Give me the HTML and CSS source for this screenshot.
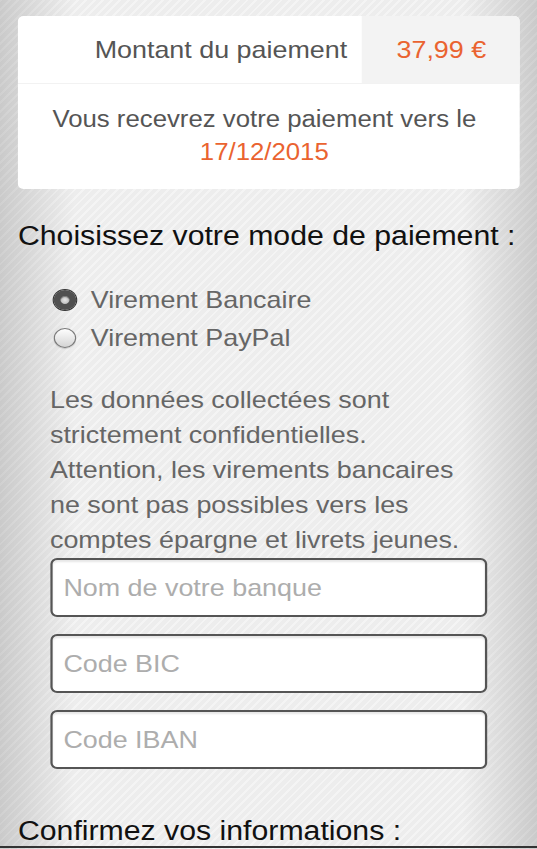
FILE: index.html
```html
<!DOCTYPE html>
<html>
	<head>
		<meta charset="utf-8">
		<title>Paiement</title>
		<link rel="stylesheet" href="styles.css">
	</head>
	<body>
		<div class="page">
			<div class="content">
				<div class="recap">
					<div class="recap-row">
						<div class="recap-label">Montant du paiement</div>
						<div class="recap-amount">37,99 €</div>
					</div>
					<div class="recap-date">
						Vous recevrez votre paiement vers le<br>
						<span class="orange">17/12/2015</span>
					</div>
				</div>

				<h2 class="title">Choisissez votre mode de paiement :</h2>

				<div class="modes">
					<label class="mode"><span class="radio checked"></span>Virement Bancaire</label>
					<label class="mode"><span class="radio"></span>Virement PayPal</label>
				</div>

				<p class="info">Les données collectées sont strictement confidentielles. Attention, les virements bancaires ne sont pas possibles vers les comptes épargne et livrets jeunes.</p>

				<div class="fields">
					<input class="field" type="text" placeholder="Nom de votre banque">
					<input class="field" type="text" placeholder="Code BIC">
					<input class="field" type="text" placeholder="Code IBAN">
				</div>

				<h2 class="title title2">Confirmez vos informations :</h2>
			</div>
			<div class="next-bar"></div>
		</div>
	</body>
</html>
```

FILE: styles.css
```css
*{
	margin: 0;
	padding: 0;
	box-sizing: border-box;
}
html,body{
	height: 100%;
}
body{
	font-family: "Liberation Sans", Arial, sans-serif;
	background-color: #ededed;
	background-image:
		linear-gradient(to right, rgba(0,0,0,0.15) 0px, rgba(0,0,0,0) 75px, rgba(0,0,0,0) 462px, rgba(0,0,0,0.15) 537px),
		repeating-linear-gradient(135deg, rgba(255,255,255,0.4) 0px, rgba(255,255,255,0.4) 2px, rgba(255,255,255,0) 2px, rgba(255,255,255,0) 6px);
	overflow: hidden;
}
.page{
	width: 479.5px;
	transform: scaleX(1.12);
	transform-origin: 0 0;
}
.content{
	padding: 16px 15.5px 0 16px;
}
.recap{
	background: #fff;
	border-radius: 5px;
	overflow: hidden;
	color: #555;
	font-size: 24px;
}
.recap-row{
	display: flex;
	height: 68px;
	border-bottom: 1px solid #f2f2f2;
}
.recap-label{
	flex: 1;
	display: flex;
	align-items: center;
	justify-content: flex-end;
	padding-right: 13px;
}
.recap-amount{
	width: 141px;
	background: #f3f3f3;
	color: #ea6330;
	display: flex;
	align-items: center;
	padding-left: 31px;
}
.recap-date{
	text-align: center;
	font-size: 23px;
	line-height: 33px;
	padding: 19px 8px 20px 0;
}
.orange{
	color: #ea6330;
}
.title{
	font-weight: normal;
	font-size: 27px;
	line-height: 32px;
	color: #111;
	margin-top: 31px;
}
.modes{
	display: flex;
	flex-direction: column;
	margin: 29px 0 0 32px;
	font-size: 24px;
	line-height: 38px;
	color: #666;
}
.mode{
	display: flex;
	align-items: center;
	gap: 13px;
}
.radio{
	width: 20px;
	height: 20px;
	border-radius: 50%;
	border: 1px solid #7a7a7a;
	background: linear-gradient(#fefefe, #d4d4d4);
	box-shadow: 0 1px 1px rgba(0,0,0,0.15);
}
.radio.checked{
	border: 6px solid #505050;
	background: radial-gradient(circle, #e6e6e6 0%, #b0b0b0 100%);
	box-shadow: 0 0 0 1px #333, inset 0 1px 1px rgba(0,0,0,0.4);
}
.info{
	width: 372px;
	margin: 25px 0 0 28.6px;
	font-size: 24px;
	line-height: 35px;
	color: #666;
}
.fields{
	display: flex;
	flex-direction: column;
	gap: 17px;
	margin: 1px 29px 0 28.6px;
}
.field{
	height: 59px;
	border: 2px solid #555;
	border-radius: 6px;
	background: #fff;
	font-family: "Liberation Sans", Arial, sans-serif;
	font-size: 24px;
	padding: 0 10px;
	color: #333;
	box-shadow: inset 0 2px 2px rgba(0,0,0,0.1);
}
.field::placeholder{
	color: #adadad;
}
.title2{
	line-height: 30px;
	margin-top: 47px;
}
.next-bar{
	height: 3px;
	border-top: 2px solid #333;
}
```
